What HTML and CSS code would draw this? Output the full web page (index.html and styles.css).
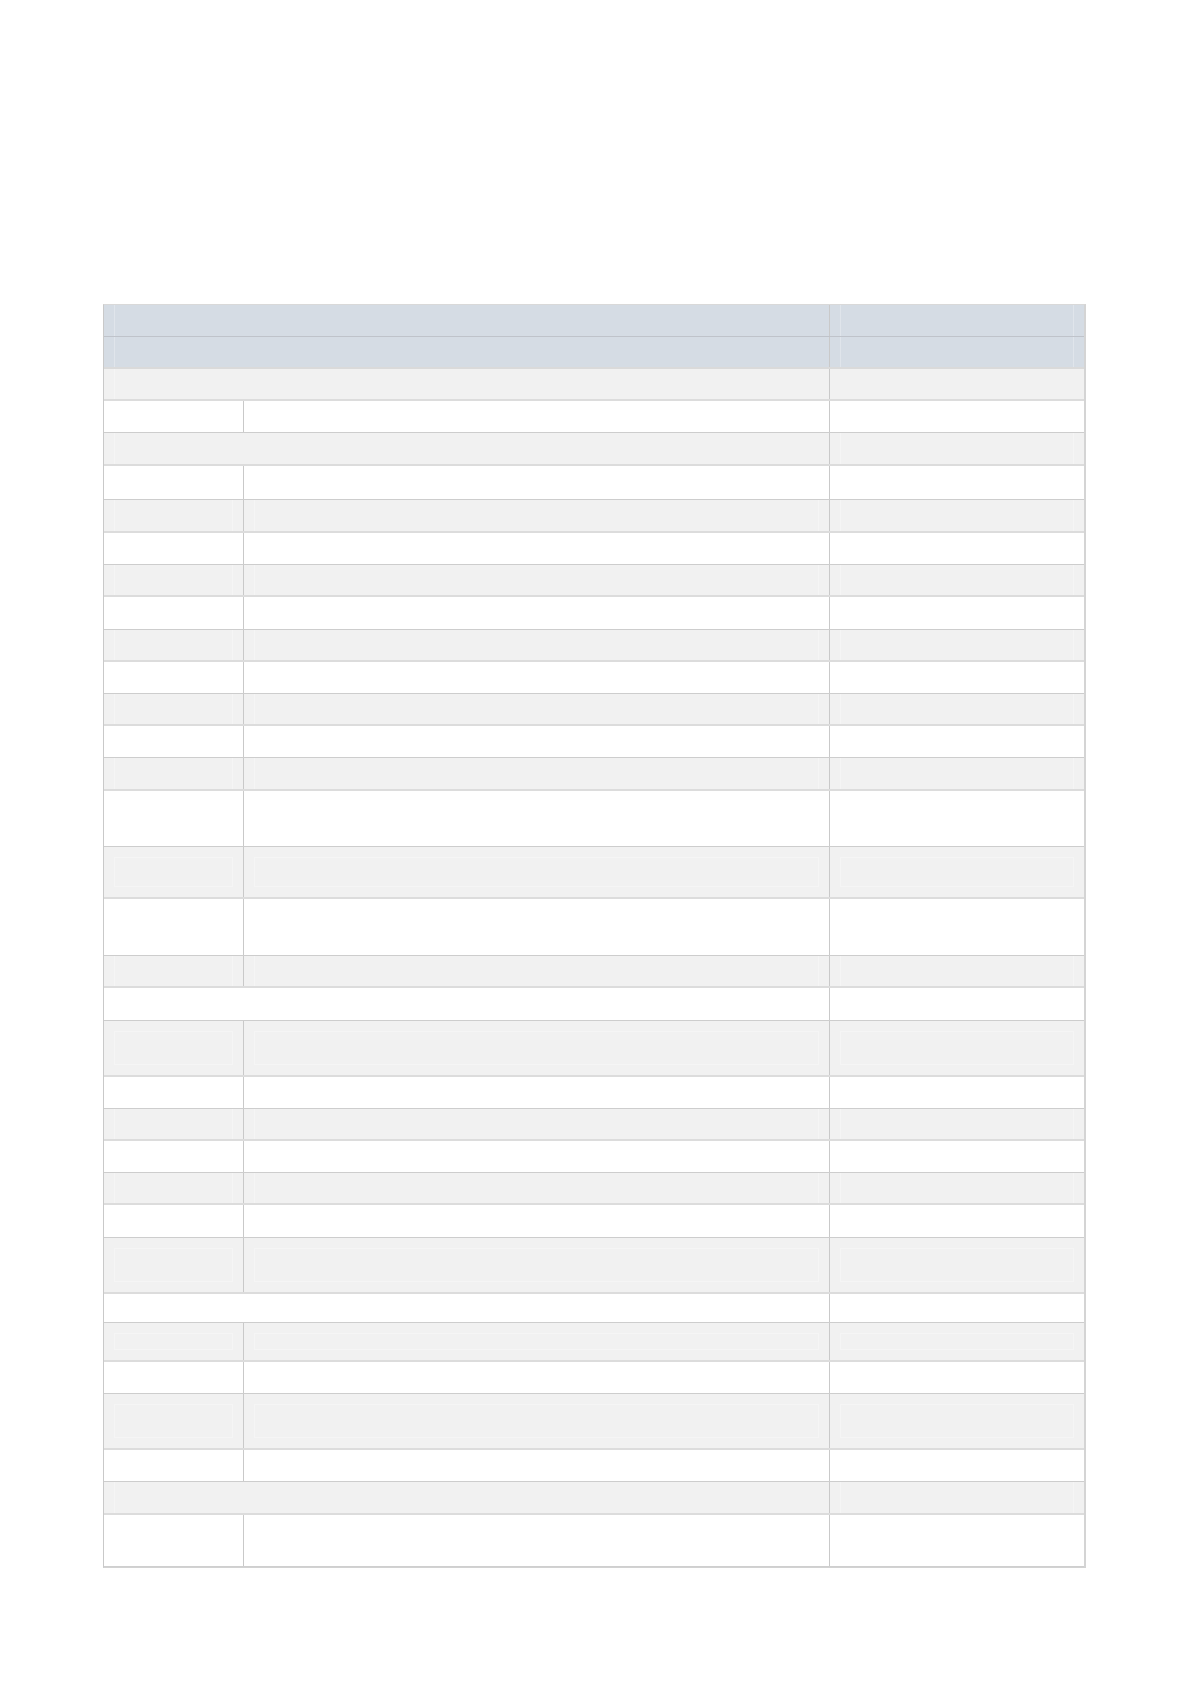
FILE: index.html
```html
<!DOCTYPE html>
<html lang="en">
<head>
<meta charset="utf-8">
<title>Table</title>
<link rel="stylesheet" href="styles.css">
</head>
<body>
<div class="page">
  <div class="table">
    <div class="row hdr h32"><div class="cell span"><div class="box"></div></div><div class="cell last"><div class="box"></div></div></div>
    <div class="row hdr h32 first-after"><div class="cell span"><div class="box"></div></div><div class="cell last"><div class="box"></div></div></div>
    <div class="row g h32"><div class="cell span"><div class="box"></div></div><div class="cell last"></div></div>
    <div class="row w h32"><div class="cell"></div><div class="cell"></div><div class="cell last"></div></div>
    <div class="row g h33"><div class="cell span"><div class="box"></div></div><div class="cell last"><div class="box"></div></div></div>
    <div class="row w h34"><div class="cell"></div><div class="cell"></div><div class="cell last"></div></div>
    <div class="row g h33"><div class="cell"><div class="box"></div></div><div class="cell"><div class="box"></div></div><div class="cell last"><div class="box"></div></div></div>
    <div class="row w h32"><div class="cell"></div><div class="cell"></div><div class="cell last"></div></div>
    <div class="row g h32"><div class="cell"><div class="box"></div></div><div class="cell"><div class="box"></div></div><div class="cell last"><div class="box"></div></div></div>
    <div class="row w h33"><div class="cell"></div><div class="cell"></div><div class="cell last"></div></div>
    <div class="row g h32"><div class="cell"><div class="box"></div></div><div class="cell"><div class="box"></div></div><div class="cell last"><div class="box"></div></div></div>
    <div class="row w h32"><div class="cell"></div><div class="cell"></div><div class="cell last"></div></div>
    <div class="row g h32"><div class="cell"><div class="box"></div></div><div class="cell"><div class="box"></div></div><div class="cell last"><div class="box"></div></div></div>
    <div class="row w h32"><div class="cell"></div><div class="cell"></div><div class="cell last"></div></div>
    <div class="row g h33"><div class="cell"><div class="box"></div></div><div class="cell"><div class="box"></div></div><div class="cell last"><div class="box"></div></div></div>
    <div class="row w h56"><div class="cell"></div><div class="cell"></div><div class="cell last"></div></div>
    <div class="row g h52 tall"><div class="cell"><div class="box"></div></div><div class="cell"><div class="box"></div></div><div class="cell last"><div class="box"></div></div></div>
    <div class="row w h57"><div class="cell"></div><div class="cell"></div><div class="cell last"></div></div>
    <div class="row g h32"><div class="cell"><div class="box"></div></div><div class="cell"><div class="box"></div></div><div class="cell last"><div class="box"></div></div></div>
    <div class="row w h33"><div class="cell span"></div><div class="cell last"></div></div>
    <div class="row g h56 tall"><div class="cell"><div class="box"></div></div><div class="cell"><div class="box"></div></div><div class="cell last"><div class="box"></div></div></div>
    <div class="row w h32"><div class="cell"></div><div class="cell"></div><div class="cell last"></div></div>
    <div class="row g h32"><div class="cell"><div class="box"></div></div><div class="cell"><div class="box"></div></div><div class="cell last"><div class="box"></div></div></div>
    <div class="row w h32"><div class="cell"></div><div class="cell"></div><div class="cell last"></div></div>
    <div class="row g h32"><div class="cell"><div class="box"></div></div><div class="cell"><div class="box"></div></div><div class="cell last"><div class="box"></div></div></div>
    <div class="row w h33"><div class="cell"></div><div class="cell"></div><div class="cell last"></div></div>
    <div class="row g h56 tall"><div class="cell"><div class="box"></div></div><div class="cell"><div class="box"></div></div><div class="cell last"><div class="box"></div></div></div>
    <div class="row w h29"><div class="cell span"></div><div class="cell last"></div></div>
    <div class="row g h39 tall"><div class="cell"><div class="box"></div></div><div class="cell"><div class="box"></div></div><div class="cell last"><div class="box"></div></div></div>
    <div class="row w h32"><div class="cell"></div><div class="cell"></div><div class="cell last"></div></div>
    <div class="row g h56 tall"><div class="cell"><div class="box"></div></div><div class="cell"><div class="box"></div></div><div class="cell last"><div class="box"></div></div></div>
    <div class="row w h32"><div class="cell"></div><div class="cell"></div><div class="cell last"></div></div>
    <div class="row g h33"><div class="cell span"><div class="box"></div></div><div class="cell last"><div class="box"></div></div></div>
    <div class="row w h52 final"><div class="cell"></div><div class="cell"></div><div class="cell last"></div></div>
  </div>
</div>
</body>
</html>
```

FILE: styles.css
```css
html, body {
  margin: 0;
  padding: 0;
  background: #ffffff;
  font-family: "Liberation Sans", Arial, sans-serif;
}

.page {
  padding: 304px 0 0 103px;
}

.table {
  width: 983px;
  box-sizing: border-box;
  border-top: 1px solid #d9d9d9;
  border-left: 1px solid #c9c9c9;
  border-right: 2px solid #d4d4d4;
  border-bottom: 1px solid #d2d2d2;
}

.row {
  display: grid;
  grid-template-columns: 140px 586px 1fr;
  box-sizing: border-box;
  border-bottom: 1px solid #cdcdcd;
}

.row.final {
  border-bottom: 1px solid #cfcfcf;
}

.row.hdr {
  background: #d5dce4;
  border-bottom-color: #bfc3ca;
}

.row.hdr.first-after {
  border-bottom: 2px solid #dadada;
}

.row.g {
  background: #f1f1f1;
  border-bottom: 2px solid #dcdcdc;
}

.row.w {
  background: #ffffff;
}

.cell {
  border-right: 1px solid #c9c9c9;
  padding: 0 10px;
  display: flex;
  align-items: stretch;
}

.cell.span {
  grid-column: 1 / 3;
}

.cell.last {
  border-right: none;
}

.box {
  flex: 1;
  border-left: 1px solid rgba(255, 255, 255, 0.28);
  border-right: 1px solid rgba(255, 255, 255, 0.28);
}

.cell.span .box {
  border-right: none;
}

.row.tall .box {
  margin: 10px 0;
  border: 1px solid rgba(255, 255, 255, 0.28);
}

.h29 { height: 29px; }
.h32 { height: 32px; }
.h33 { height: 33px; }
.h34 { height: 34px; }
.h39 { height: 39px; }
.h52 { height: 52px; }
.h56 { height: 56px; }
.h57 { height: 57px; }
```
